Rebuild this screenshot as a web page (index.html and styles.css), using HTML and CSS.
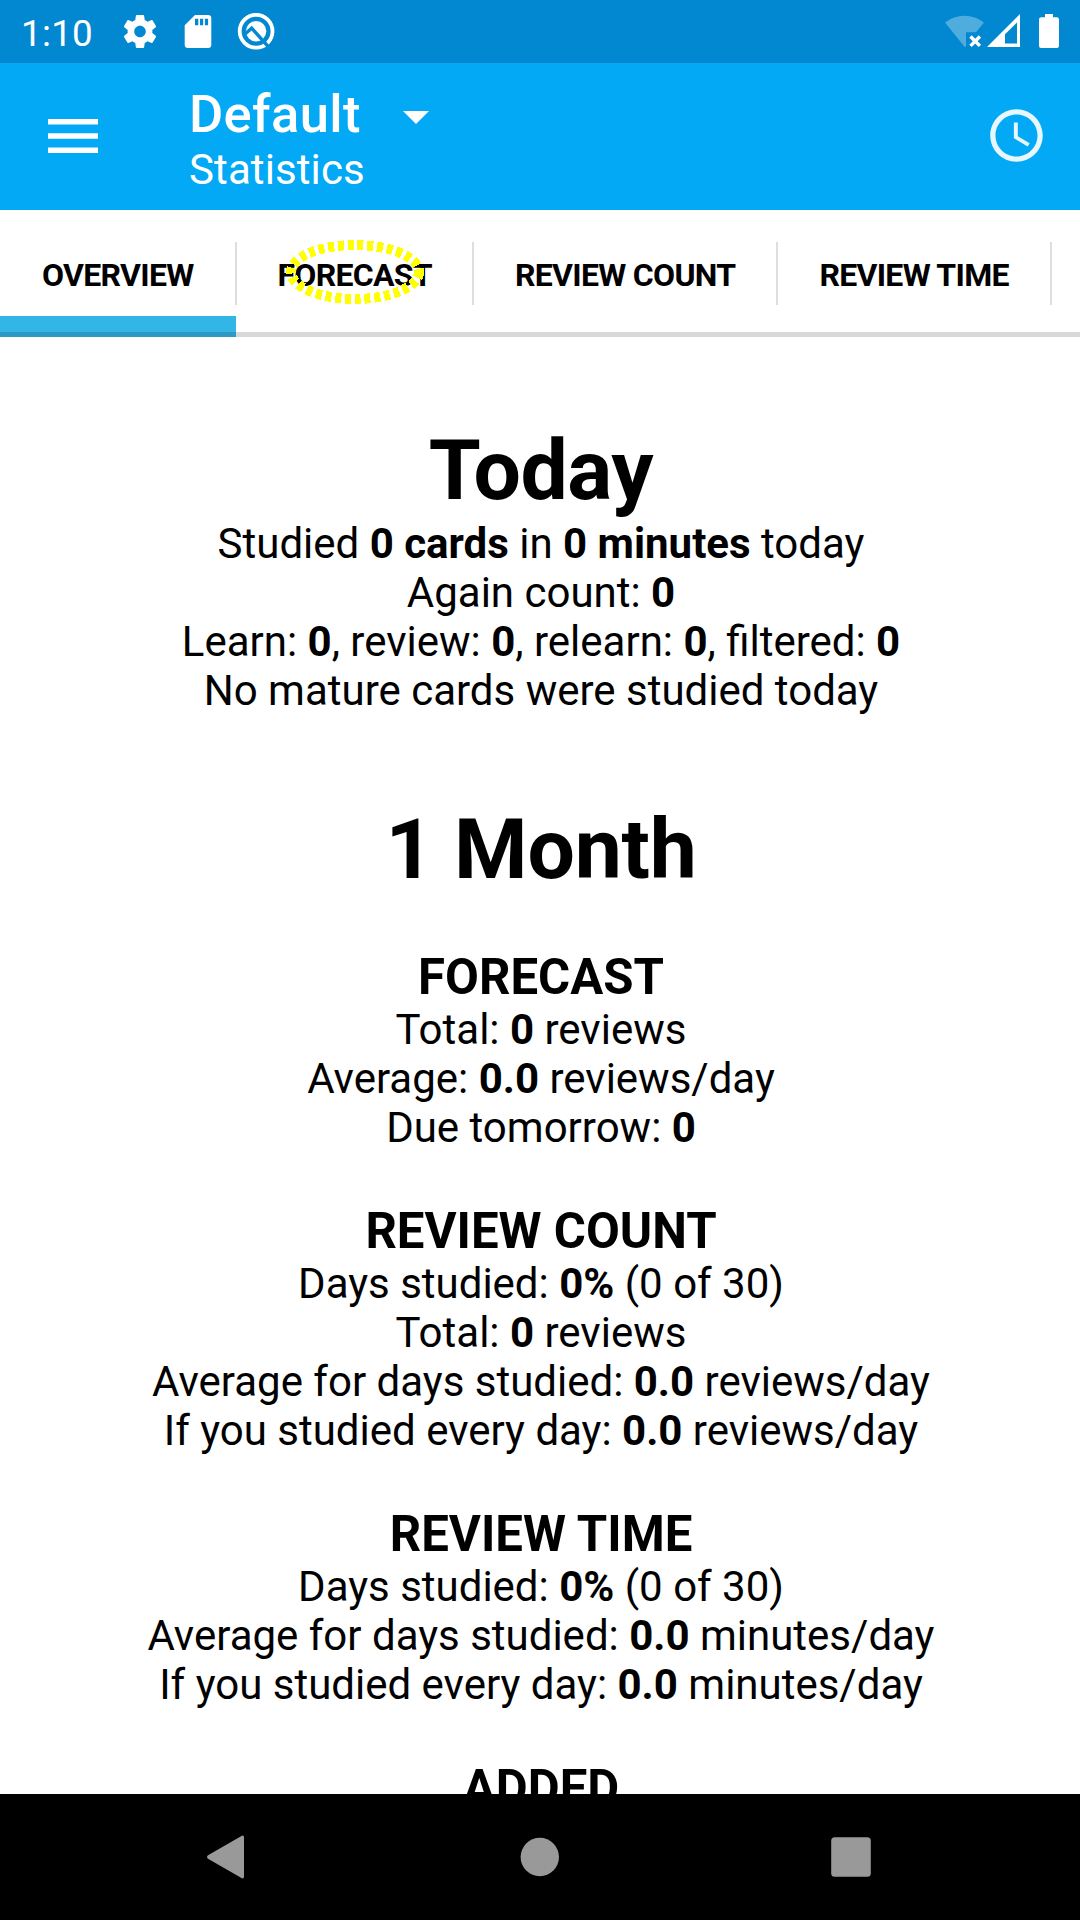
FILE: index.html
```html
<!DOCTYPE html>
<html lang="en">
<head>
<meta charset="utf-8">
<title>Statistics</title>
<link rel="stylesheet" href="styles.css">
</head>
<body>
<div class="screen">
  <div class="status">
    <span class="time">1:10</span>
    <svg class="left-icons" viewBox="120 0 160 63">
      <g transform="translate(120.2 11.7) scale(1.65)"><path fill="#fff" d="M19.43 12.98c.04-.32.07-.64.07-.98s-.03-.66-.07-.98l2.11-1.65c.19-.15.24-.42.12-.64l-2-3.46c-.12-.22-.39-.3-.61-.22l-2.49 1c-.52-.4-1.08-.73-1.69-.98l-.38-2.65C14.46 2.18 14.25 2 14 2h-4c-.25 0-.46.18-.49.42l-.38 2.65c-.61.25-1.17.59-1.69.98l-2.49-1c-.23-.09-.49 0-.61.22l-2 3.46c-.13.22-.07.49.12.64l2.11 1.65c-.04.32-.07.65-.07.98s.03.66.07.98l-2.11 1.65c-.19.15-.24.42-.12.64l2 3.46c.12.22.39.3.61.22l2.49-1c.52.4 1.08.73 1.69.98l.38 2.65c.03.24.24.42.49.42h4c.25 0 .46-.18.49-.42l.38-2.65c.61-.25 1.17-.59 1.69-.98l2.49 1c.23.09.49 0 .61-.22l2-3.46c.12-.22.07-.49-.12-.64l-2.11-1.65zM12 15.500c-1.930 0-3.500-1.570-3.500-3.500s1.570-3.500 3.500-3.500 3.500 1.570 3.500 3.500-1.570 3.500-3.500 3.500z"/></g>
      <path fill="#fff" fill-rule="evenodd" d="M195 15h13a3.300 3.300 0 0 1 3.300 3.300v26.400a3.300 3.300 0 0 1-3.300 3.300h-20a3.300 3.300 0 0 1-3.300-3.300v-19.400zM195 18.700v6.600h3.300v-6.600zM200 18.700v6.600h3.200v-6.600zM204.900 18.700v6.600h3.200v-6.600z"/>
      <circle cx="256.100" cy="31.200" r="16.400" fill="none" stroke="#fff" stroke-width="3.800"/>
      <circle cx="256.100" cy="31.200" r="10.200" fill="#fff"/>
      <path fill="none" stroke="#0288d1" stroke-width="3.400" d="M244.500 34.500l7.200-6.300L269.500 48"/>
    </svg>
    <svg class="right-icons" viewBox="940 0 125 63">
      <path fill="#fff" fill-opacity=".3" d="M945 22.500a32 32 0 0 1 39 0l-8 9.700h-10v14.500h-1.500z"/>
      <path stroke="#fff" stroke-width="3.400" d="M970.500 36.500l9.400 9.400M979.900 36.500l-9.400 9.400"/>
      <path fill="#fff" fill-rule="evenodd" d="M1020 14v33h-33zM1017 22.500l-12 11.800v9.200h12z"/>
      <path fill="#fff" d="M1045 14h8v3.300h3.700a2.300 2.300 0 0 1 2.300 2.300v26.200a2.200 2.200 0 0 1-2.300 2.200h-15.400a2.200 2.200 0 0 1-2.300-2.200v-26.200a2.300 2.300 0 0 1 2.300-2.300h3.700z"/>
    </svg>
  </div>

  <header class="appbar">
    <svg class="menu" viewBox="0 0 50 34"><path fill="#fff" d="M0 0h50v5.500H0zM0 14.200h50v5.500H0zM0 28.400h50v5.600H0z"/></svg>
    <div class="titles">
      <div class="title">Default<svg class="caret" viewBox="0 0 26 13"><path fill="#fff" d="M0 0h26L13 13z"/></svg></div>
      <div class="subtitle">Statistics</div>
    </div>
    <svg class="clock" viewBox="0 0 24 24"><path fill="#fff" fill-opacity=".9" d="M11.990 2C6.470 2 2 6.480 2 12s4.470 10 9.990 10C17.520 22 22 17.520 22 12S17.520 2 11.990 2zM12 20c-4.420 0-8-3.580-8-8s3.580-8 8-8 8 3.580 8 8-3.580 8-8 8zm.5-13H11v6l5.250 3.150.75-1.230-4.500-2.670z"/></svg>
  </header>

  <nav class="tabs">
    <div class="tab active"><span>OVERVIEW</span></div>
    <div class="tab"><span>FORECAST</span>
      <svg class="ring" viewBox="0 0 140 66"><ellipse cx="70" cy="33" rx="64" ry="27"/></svg>
    </div>
    <div class="tab wide"><span>REVIEW COUNT</span></div>
    <div class="tab wide"><span>REVIEW TIME</span></div>
  </nav>

  <main class="content">
    <h1>Today</h1>
    <p>Studied <b>0 cards</b> in <b>0 minutes</b> today</p>
    <p>Again count: <b>0</b></p>
    <p>Learn: <b>0</b>, review: <b>0</b>, relearn: <b>0</b>, filtered: <b>0</b></p>
    <p>No mature cards were studied today</p>
    <h1 class="period">1 Month</h1>
    <h3>FORECAST</h3>
    <p>Total: <b>0</b> reviews</p>
    <p>Average: <b>0.0</b> reviews/day</p>
    <p>Due tomorrow: <b>0</b></p>
    <h3>REVIEW COUNT</h3>
    <p>Days studied: <b>0%</b> (0 of 30)</p>
    <p>Total: <b>0</b> reviews</p>
    <p>Average for days studied: <b>0.0</b> reviews/day</p>
    <p>If you studied every day: <b>0.0</b> reviews/day</p>
    <h3>REVIEW TIME</h3>
    <p>Days studied: <b>0%</b> (0 of 30)</p>
    <p>Average for days studied: <b>0.0</b> minutes/day</p>
    <p>If you studied every day: <b>0.0</b> minutes/day</p>
    <h3>ADDED</h3>
  </main>

  <footer class="navbar">
    <svg viewBox="0 0 44 44"><path d="M4 20.300L37.500 1a1.500 1.500 0 0 1 2.500 1.200v39.600a1.500 1.500 0 0 1-2.500 1.200L4 23.700a2 2 0 0 1 0-3.400z"/></svg>
    <svg viewBox="0 0 44 44"><circle cx="22.800" cy="22" r="19.200"/></svg>
    <svg viewBox="0 0 44 44"><rect x="2.200" y="2.200" width="39.600" height="39.600" rx="3.500"/></svg>
  </footer>
</div>
</body>
</html>
```
FILE: styles.css
```css
* { box-sizing: border-box; margin: 0; padding: 0; }
body { background: #fff; color: #000; font-family: Roboto, sans-serif; }
svg { display: block; flex: none; }
.screen { width: 1080px; height: 1920px; display: flex; flex-direction: column; overflow: hidden; }

.status { height: 63px; flex: none; display: flex; align-items: center; background: #0288d1; color: #fff; padding: 0 15px 0 21px; }
.time { width: 99px; font-size: 36.75px; line-height: 43px; padding-top: 3px; letter-spacing: 0.3px; }
.left-icons { width: 160px; height: 63px; }
.right-icons { width: 125px; height: 63px; margin-left: auto; }

.appbar { height: 147px; flex: none; display: flex; align-items: center; background: #03a9f4; color: #fff; padding: 0 32px 2px 48px; }
.menu { width: 50px; height: 34px; }
.titles { margin-left: 91px; flex: 1; padding-top: 6px; }
.title { display: flex; align-items: center; font-size: 52.5px; font-weight: 500; line-height: 61px; letter-spacing: 0.35px; }
.caret { width: 26px; height: 13px; margin: 7px 0 0 42px; }
.subtitle { font-size: 42px; line-height: 49px; letter-spacing: 0.1px; }
.clock { width: 63px; height: 63px; }

.tabs { height: 127px; flex: none; display: flex; border-bottom: 5px solid #d8d8d8; }
.tab { position: relative; flex: none; height: 127px; padding: 32px 0 32px 41px; display: flex; align-items: center; white-space: nowrap; font-size: 32px; font-weight: 700; line-height: 59px; letter-spacing: -0.7px; }
.tab span { padding-top: 4px; }
.tab::after { content: ""; width: 2px; height: 63px; margin-left: 40px; background: #dedede; }
.wide::after { margin-left: 41px; }
.active { padding-left: 42px; background: linear-gradient(#33b5e5, #33b5e5) 0 106px / calc(100% - 1px) 16px no-repeat, linear-gradient(#2c9ac3, #2c9ac3) 0 122px / calc(100% - 1px) 5px no-repeat; }
.active::after { margin-left: 41px; }
.ring { position: absolute; left: 48px; top: 29px; width: 140px; height: 66px; }
.ring ellipse { fill: none; stroke: #ff0; stroke-width: 10; stroke-dasharray: 6 3.8; shape-rendering: crispEdges; }

.content { flex: 1; min-height: 0; overflow: hidden; padding: 86px 0 0 2px; text-align: center; font-size: 42px; }
.content h1 { font-size: 84px; line-height: 96px; letter-spacing: -0.4px; }
.content .period { margin-top: 87px; letter-spacing: -0.2px; }
.content h3 { margin-top: 51px; font-size: 49.14px; line-height: 56px; }
.content p { line-height: 49px; }

.navbar { height: 126px; flex: none; background: #000; display: flex; align-items: center; justify-content: space-between; padding: 0 207px 0 204px; }
.navbar svg { width: 44px; height: 44px; fill: #999; }
```
